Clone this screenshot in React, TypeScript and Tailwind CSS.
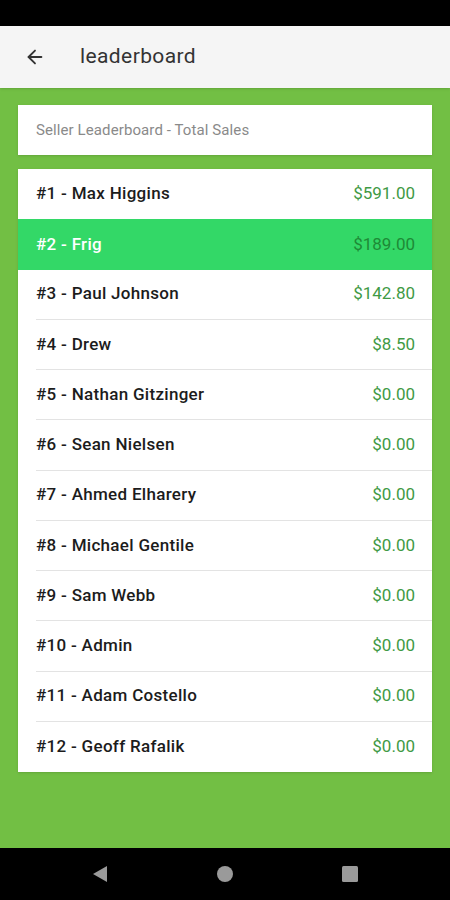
import { ArrowLeft } from "lucide-react";

const rows = [
  { name: "#1 - Max Higgins", amount: "$591.00" },
  { name: "#2 - Frig", amount: "$189.00", active: true },
  { name: "#3 - Paul Johnson", amount: "$142.80" },
  { name: "#4 - Drew", amount: "$8.50" },
  { name: "#5 - Nathan Gitzinger", amount: "$0.00" },
  { name: "#6 - Sean Nielsen", amount: "$0.00" },
  { name: "#7 - Ahmed Elharery", amount: "$0.00" },
  { name: "#8 - Michael Gentile", amount: "$0.00" },
  { name: "#9 - Sam Webb", amount: "$0.00" },
  { name: "#10 - Admin", amount: "$0.00" },
  { name: "#11 - Adam Costello", amount: "$0.00" },
  { name: "#12 - Geoff Rafalik", amount: "$0.00" },
];

export default function App() {
  return (
    <div className="w-[450px] h-[900px] flex flex-col bg-[#72bf44] font-['Roboto',sans-serif]">
      {/* status bar */}
      <div className="h-[26px] bg-black shrink-0" />
      {/* app bar */}
      <div className="h-[62px] shrink-0 bg-[#f5f5f5] flex items-center shadow-sm">
        <ArrowLeft className="ml-[24px] w-[22px] h-[22px] text-[#333]" strokeWidth={2} />
        <span className="ml-[34px] text-[21px] tracking-[0.4px] text-[#333]">leaderboard</span>
      </div>
      {/* content */}
      <div className="flex-1 px-[18px] pt-[17px]">
        <div className="h-[50px] bg-white flex items-center pl-[18px] shadow-sm">
          <span className="text-[15px] tracking-[0.1px] text-[#8a8a8a]">
            Seller Leaderboard - Total Sales
          </span>
        </div>
        <div className="mt-[14px] bg-white shadow-sm">
          {rows.map((r, i) => (
            <div
              key={i}
              className={r.active ? "h-[50.25px] bg-[#33d867]" : "h-[50.25px] bg-white pl-[18px]"}
            >
              <div
                className={
                  r.active
                    ? "h-full flex items-center justify-between pl-[18px] pr-[17px]"
                    : i < rows.length - 1 && !rows[i + 1]?.active
                    ? "h-full flex items-center justify-between pr-[17px] border-b border-[#e3e3e3]"
                    : "h-full flex items-center justify-between pr-[17px]"
                }
              >
                <span
                  className={
                    r.active
                      ? "text-[17px] font-medium tracking-[0.3px] text-white"
                      : "text-[17px] font-medium tracking-[0.3px] text-[#1c1c1c]"
                  }
                >
                  {r.name}
                </span>
                <span
                  className={
                    r.active ? "text-[17px] text-[#1e8a36]" : "text-[17px] text-[#3f9a45]"
                  }
                >
                  {r.amount}
                </span>
              </div>
            </div>
          ))}
        </div>
      </div>
      {/* nav bar */}
      <div className="h-[52px] shrink-0 bg-black flex items-center justify-between px-[91px]">
        <svg width="18" height="18" viewBox="0 0 18 18">
          <polygon points="16,1 16,17 2,9" fill="#9a9a9a" />
        </svg>
        <svg width="18" height="18" viewBox="0 0 18 18">
          <circle cx="9" cy="9" r="8" fill="#9a9a9a" />
        </svg>
        <svg width="18" height="18" viewBox="0 0 18 18">
          <rect x="1" y="1" width="16" height="16" rx="1.5" fill="#9a9a9a" />
        </svg>
      </div>
    </div>
  );
}
